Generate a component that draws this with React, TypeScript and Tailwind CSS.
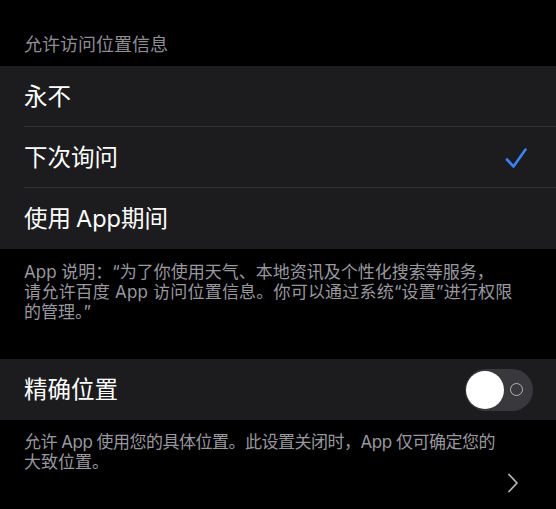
import React from "react";

const font = { fontFamily: 'Inter, "Noto Sans CJK SC", sans-serif' };

function Row({ children, right, last }: { children: React.ReactNode; right?: React.ReactNode; last?: boolean }) {
  return (
    <div className="pl-6">
      <div
        className={
          "flex h-[61px] items-center justify-between pr-[29px] " +
          (last ? "" : "border-b border-[#333335]")
        }
      >
        <span className="pt-[1px] text-[23.5px] leading-[28px] text-white">{children}</span>
        {right}
      </div>
    </div>
  );
}

export default function App() {
  return (
    <div className="h-[509px] w-[556px] overflow-hidden bg-black" style={font}>
      <div className="flex h-[66px] items-end pb-[10px] pl-6">
        <span className="text-[18px] leading-[22px] text-[#8e8e93]">允许访问位置信息</span>
      </div>

      <div className="bg-[#1c1c1e]">
        <Row>永不</Row>
        <Row
          right={
            <svg width="22" height="22" viewBox="0 0 22 22" className="mt-[2px]">
              <path
                d="M2 12.5 L8.5 19.5 L20.5 2.5"
                fill="none"
                stroke="#3a82f7"
                strokeWidth="2.6"
                strokeLinecap="round"
                strokeLinejoin="round"
              />
            </svg>
          }
        >
          下次询问
        </Row>
        <Row last>
          使用<span className="ml-[5px]">App</span>期间
        </Row>
      </div>

      <div className="pl-6 pr-4 pt-[13px] text-[17px] leading-[20px] text-[#98989e]">
        <div className="whitespace-nowrap">App 说明：“为了你使用天气、本地资讯及个性化搜索等服务，</div>
        <div className="whitespace-nowrap tracking-[0.2px]">请允许百度 App 访问位置信息。你可以通过系统“设置”进行权限</div>
        <div className="whitespace-nowrap">的管理。”</div>
      </div>

      <div className="mt-[37px] bg-[#1c1c1e]">
        <div className="flex h-[61px] items-center justify-between pl-6 pr-[23px]">
          <span className="pt-[1px] text-[23.5px] leading-[28px] text-white">精确位置</span>
          <div className="flex h-[42px] w-[68px] items-center rounded-full bg-[#39393d] pl-[1px] pr-[10px]">
            <div className="h-[38px] w-[38px] rounded-full bg-white" />
            <div className="ml-auto h-[13px] w-[13px] rounded-full border-[1.5px] border-[#b3b3b7]" />
          </div>
        </div>
      </div>

      <div className="pl-6 pr-4 pt-[12px] text-[17px] leading-[20px] text-[#98989e]">
        <div className="whitespace-nowrap tracking-[-0.5px]">允许 App 使用您的具体位置。此设置关闭时，App 仅可确定您的</div>
        <div className="whitespace-nowrap">大致位置。</div>
      </div>

      <div className="flex justify-end pr-[37px] pt-[1px]">
        <svg width="12" height="20" viewBox="0 0 12 20">
          <path d="M2 1.5 L10 10 L2 18.5" fill="none" stroke="#b8b8bc" strokeWidth="1.8" strokeLinecap="round" strokeLinejoin="round" />
        </svg>
      </div>
    </div>
  );
}
